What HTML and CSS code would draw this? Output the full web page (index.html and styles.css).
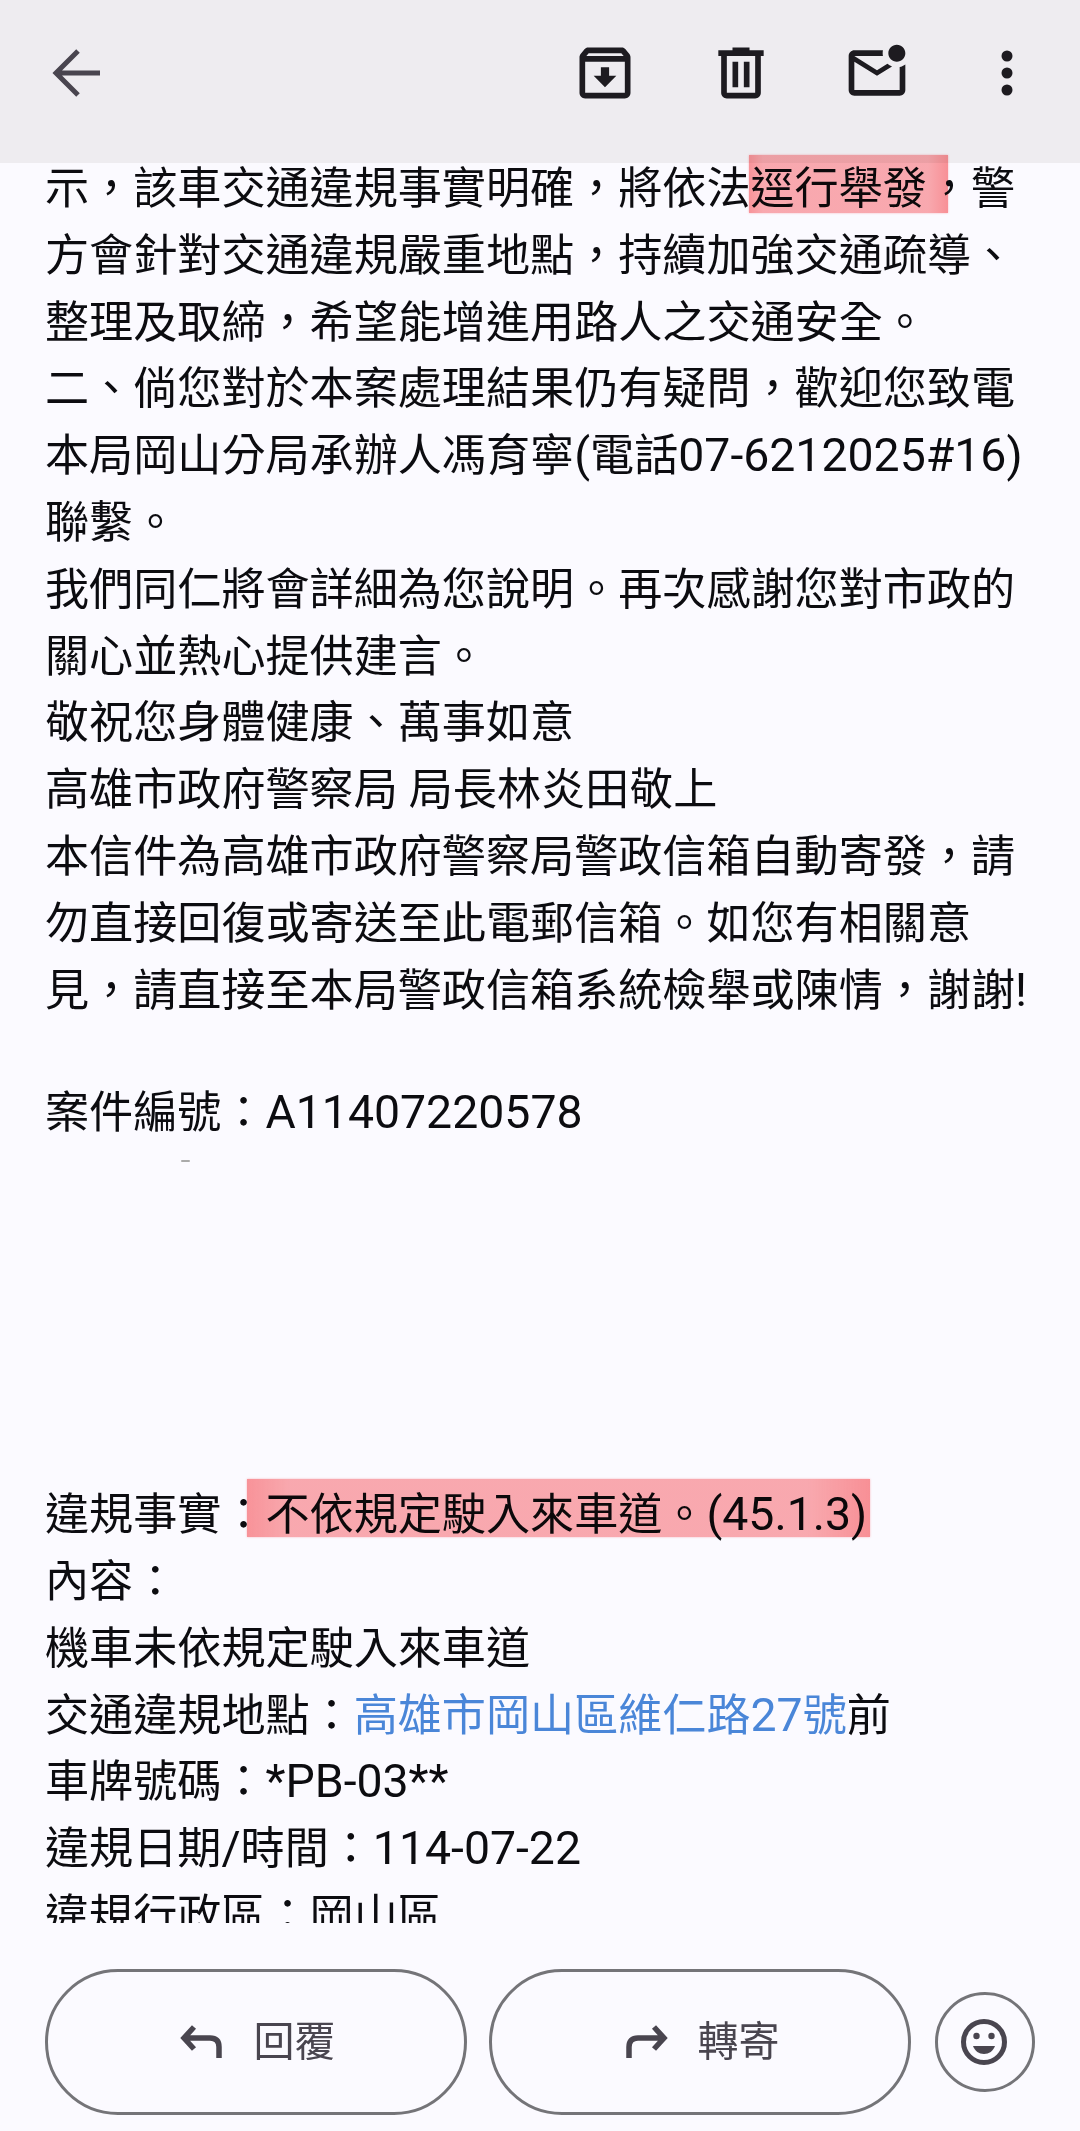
FILE: index.html
```html
<!DOCTYPE html>
<html lang="zh-Hant">
<head>
  <meta charset="UTF-8">
  <title>案件回覆信件</title>
  <link rel="stylesheet" href="styles.css">
</head>
<body>

<div class="page">

  <!-- top toolbar -->
  <div class="toolbar">
    <svg class="back-icon" viewBox="0 0 68 68"><path d="M57 34H15M35 12 13 34l22 22"/></svg>
    <div class="actions">
      <svg class="icon" viewBox="0 0 24 24"><path d="M20.54 5.23l-1.39-1.68C18.88 3.21 18.47 3 18 3H6c-.47 0-.88.21-1.16.55L3.46 5.23C3.17 5.57 3 6.02 3 6.5V19c0 1.1.9 2 2 2h14c1.1 0 2-.9 2-2V6.5c0-.48-.17-.93-.46-1.27zM6.24 5h11.52l.83 1H5.42l.82-1zM5 19V8h14v11H5zm8.45-9h-2.9v3H8l4 4 4-4h-2.55z"/></svg>
      <svg class="icon" viewBox="0 0 24 24"><path d="M15 4V3H9v1H4v2h1v13c0 1.1.9 2 2 2h10c1.1 0 2-.9 2-2V6h1V4h-5zm2 15H7V6h10v13zM9 8h2v9H9zm4 0h2v9h-2z"/></svg>
      <svg class="icon" viewBox="0 0 24 24"><path d="M22 8.98V18c0 1.1-.9 2-2 2H4c-1.1 0-2-.9-2-2V6c0-1.1.9-2 2-2h10.1c-.06.32-.1.66-.1 1s.04.68.1 1H4l8 5 3.67-2.29c.47.43 1.02.76 1.63.98L12 13 4 8v10h16V9.9c.74-.15 1.42-.48 2-.92zM16 5c0 1.66 1.34 3 3 3s3-1.34 3-3-1.34-3-3-3-3 1.34-3 3z"/></svg>
      <svg class="icon more" viewBox="0 0 68 68"><circle cx="34" cy="17" r="5.5"/><circle cx="34" cy="34" r="5.5"/><circle cx="34" cy="51" r="5.5"/></svg>
    </div>
  </div>

  <!-- message body -->
  <div class="message">
    <div class="message-text">
      <div>示，該車交通違規事實明確，將依法逕行舉發，警</div>
      <div>方會針對交通違規嚴重地點，持續加強交通疏導、</div>
      <div>整理及取締，希望能增進用路人之交通安全。</div>
      <div>二、倘您對於本案處理結果仍有疑問，歡迎您致電</div>
      <div>本局岡山分局承辦人馮育寧<span class="latin">(</span>電話<span class="latin">07-6212025#16)</span></div>
      <div>聯繫。</div>
      <div>我們同仁將會詳細為您說明。再次感謝您對市政的</div>
      <div>關心並熱心提供建言。</div>
      <div>敬祝您身體健康、萬事如意</div>
      <div>高雄市政府警察局 局長林炎田敬上</div>
      <div>本信件為高雄市政府警察局警政信箱自動寄發，請</div>
      <div>勿直接回復或寄送至此電郵信箱。如您有相關意</div>
      <div>見，請直接至本局警政信箱系統檢舉或陳情，謝謝<span class="latin">!</span></div>
      <div class="case-no">案件編號：<span class="latin">A11407220578</span></div>
      <div class="facts">違規事實：不依規定駛入來車道。<span class="latin">(45.1.3)</span></div>
      <div>內容：</div>
      <div>機車未依規定駛入來車道</div>
      <div>交通違規地點：<span class="link">高雄市岡山區維仁路<span class="latin">27</span>號</span>前</div>
      <div>車牌號碼：<span class="latin">*PB-03**</span></div>
      <div>違規日期<span class="latin">/</span>時間：<span class="latin">114-07-22</span></div>
      <div>違規行政區：岡山區</div>
    </div>
  </div>

  <!-- reply bar -->
  <div class="reply-bar">
    <div class="pill">
      <svg class="pill-icon" viewBox="0 0 44 36"><path d="M14 3 4 14l10 11M4 14h26q9 0 9 9v11"/></svg>
      <span class="pill-label">回覆</span>
    </div>
    <div class="pill">
      <svg class="pill-icon" viewBox="0 0 44 36"><path d="M30 3l10 11-10 11M40 14H14q-9 0-9 9v11"/></svg>
      <span class="pill-label">轉寄</span>
    </div>
    <div class="emoji-btn">
      <svg class="emoji-icon" viewBox="0 0 48 48">
        <circle class="face" cx="24" cy="24" r="20.5"/>
        <circle cx="16.5" cy="18" r="3.2"/>
        <circle cx="31.5" cy="18" r="3.2"/>
        <path d="M13 28h22c-1.800 5-6 8-11 8s-9.200-3-11-8z"/>
      </svg>
    </div>
  </div>

  <!-- marks drawn on top of the screenshot -->
  <div class="mark mark-top"></div>
  <div class="mark mark-facts"></div>
  <div class="speck"></div>
</div>

</body>
</html>
```

FILE: styles.css
```css
* { box-sizing: border-box; }
html, body { margin: 0; padding: 0; }
body { background: #fbfaff; font-family: Roboto, "Noto Sans CJK TC", sans-serif; color: #0c0c10; }

.page { position: relative; width: 1080px; height: 2131px; display: flex; flex-direction: column; overflow: hidden; }

.toolbar { height: 163px; flex: none; background: #eeecf0; display: flex; align-items: flex-start; padding: 39px 39px 0 43px; }
.back-icon { width: 68px; height: 68px; fill: none; stroke: #49454f; stroke-width: 5; }
.actions { margin-left: auto; display: flex; gap: 68px; }
.icon { width: 68px; height: 68px; fill: #1d1b20; }
.more { margin-left: -6px; }

.message { flex: 1; overflow: hidden; }
.message-text { margin-top: -7px; padding-left: 45px; font-size: 44.1px; line-height: 66.8px; white-space: nowrap; }
.latin { font-size: 46.4px; line-height: 1; }
.case-no { margin-top: 55.5px; }
.facts { margin-top: 335.5px; }
.link { color: #4a86d8; }

.reply-bar { height: 208px; flex: none; display: flex; align-items: center; gap: 22px; padding: 46px 45px 16px; }
.pill { width: 422px; height: 146px; padding-left: 3px; border: 3px solid #747478; border-radius: 73px; display: flex; align-items: center; justify-content: center; gap: 30px; color: #49454f; }
.pill-label { font-size: 41px; line-height: 1; margin-top: 1px; }
.pill-icon { width: 44px; height: 36px; fill: none; stroke: #49454f; stroke-width: 5.500; }
.emoji-btn { width: 100px; height: 100px; margin-left: 2px; border: 3px solid #747478; border-radius: 50%; display: flex; align-items: center; justify-content: center; }
.emoji-icon { width: 48px; height: 48px; margin-left: -2px; fill: #49454f; }
.face { fill: none; stroke: #49454f; stroke-width: 5; }

.mark { position: absolute; background: linear-gradient(90deg, rgba(250, 90, 95, .64), rgba(250, 90, 95, .5) 7%, rgba(250, 90, 95, .5) 90%, rgba(250, 90, 95, .66)); mix-blend-mode: multiply; box-shadow: 0 0 2px rgba(250, 90, 95, .4); }
.mark-top { left: 749px; top: 155px; width: 199px; height: 58px; }
.mark-facts { left: 247px; top: 1479px; width: 623px; height: 58px; }
.speck { position: absolute; left: 181px; top: 1160px; width: 9px; height: 2px; background: #aaa; border-radius: 1px; }
```
